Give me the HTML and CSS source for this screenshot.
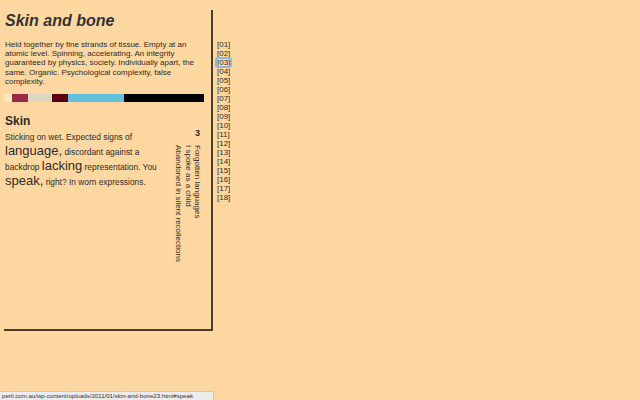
FILE: index.html
```html
<!DOCTYPE html>
<html>
<head>
<meta charset="utf-8">
<link rel="stylesheet" href="styles.css">
</head>
<body>
<div class="page">
  <div class="panel">
    <h1 class="title">Skin and bone</h1>
    <p class="intro">Held together by fine strands of tissue. Empty at an atomic level. Spinning, accelerating. An integrity guaranteed by physics, society. Individually apart, the same. Organic. Psychological complexity, false complexity.</p>
    <div class="palette">
      <span class="sw" style="width:8px;background:#ffe6bd"></span>
      <span class="sw" style="width:16px;background:#982a45"></span>
      <span class="sw" style="width:24px;background:#e0d4c3"></span>
      <span class="sw" style="width:16px;background:#5a0016"></span>
      <span class="sw" style="width:56px;background:#62c0df"></span>
      <span class="sw" style="width:80px;background:#000"></span>
    </div>
    <div class="section">
      <div class="textcol">
        <h2 class="heading">Skin</h2>
        <p class="body">Sticking on wet. Expected signs of <span class="big">language,</span> discordant against a backdrop <span class="big">lacking</span> representation. You <span class="big">speak,</span> right? In worn expressions.</p>
      </div>
      <div class="poem">
        <div class="num">3</div>
        <div class="verse">Forgotten languages<br>I spoke as a child<br>Abandoned in silent recollections</div>
      </div>
    </div>
  </div>
  <ul class="nav">
    <li>[01]</li><li>[02]</li><li class="active">[03]</li><li>[04]</li><li>[05]</li><li>[06]</li>
    <li>[07]</li><li>[08]</li><li>[09]</li><li>[10]</li><li>[11]</li><li>[12]</li>
    <li>[13]</li><li>[14]</li><li>[15]</li><li>[16]</li><li>[17]</li><li>[18]</li>
  </ul>
</div>
<div class="status">peril.com.au/wp-content/uploads/2011/01/skin-and-bone23.html#speak</div>
</body>
</html>
```
FILE: styles.css
```css
html, body {
  margin: 0;
  padding: 0;
  background: #ffd8a1;
  width: 640px;
  height: 400px;
  overflow: hidden;
  font-family: "Liberation Sans", Arial, sans-serif;
  color: #2e2a24;
}
.page {
  display: flex;
  align-items: flex-start;
  padding: 10px 0 0 4px;
}
.panel {
  width: 207px;
  height: 319px;
  border-right: 2px solid #4b3d2a;
  border-bottom: 2px solid #4b3d2a;
  display: flex;
  flex-direction: column;
}
.title {
  margin: 0;
  padding: 1px 0 0 1px;
  font-size: 16px;
  line-height: 19px;
  font-weight: bold;
  font-style: italic;
  color: #333;
}
.intro {
  margin: 10px 0 0 0;
  padding-left: 1px;
  font-size: 8px;
  line-height: 9.2px;
  width: 200px;
}
.palette {
  display: flex;
  margin-top: 8px;
  height: 8px;
}
.sw { display: block; height: 8px; }
.section {
  display: flex;
  justify-content: space-between;
  margin-top: 12px;
}
.textcol { width: 152px; padding-left: 1px; }
.heading {
  margin: 0;
  font-size: 12px;
  line-height: 14px;
  font-weight: bold;
}
.body {
  margin: 3px 0 0 0;
  font-size: 8.4px;
  line-height: 13px;
}
.big { font-size: 13px; line-height: 13px; }
.poem {
  display: flex;
  flex-direction: column;
  align-items: flex-end;
  width: 32px;
  padding-top: 14px;
  margin-right: 9px;
}
.num {
  font-size: 9px;
  font-weight: bold;
  line-height: 10px;
  margin-right: 2px;
}
.verse {
  margin-top: 7px;
  writing-mode: vertical-rl;
  font-size: 8px;
  line-height: 9.5px;
}
.nav {
  list-style: none;
  margin: 30px 0 0 3px;
  padding: 0;
  font-size: 8px;
  line-height: 9px;
  color: #2e2a24;
}
.nav li { padding: 0 1px; }
.nav .active {
  outline: 2px solid #8fb4e0;
  outline-offset: -1px;
  border-radius: 2px;
}
.status {
  position: absolute;
  left: 0;
  bottom: 0;
  width: 211px;
  height: 8px;
  padding: 0 0 0 2px;
  background: #ececec;
  border: 1px solid #c8c8c8;
  border-left: none;
  border-bottom: none;
  font-size: 6.1px;
  line-height: 8px;
  color: #333;
  white-space: nowrap;
  overflow: hidden;
}
```
